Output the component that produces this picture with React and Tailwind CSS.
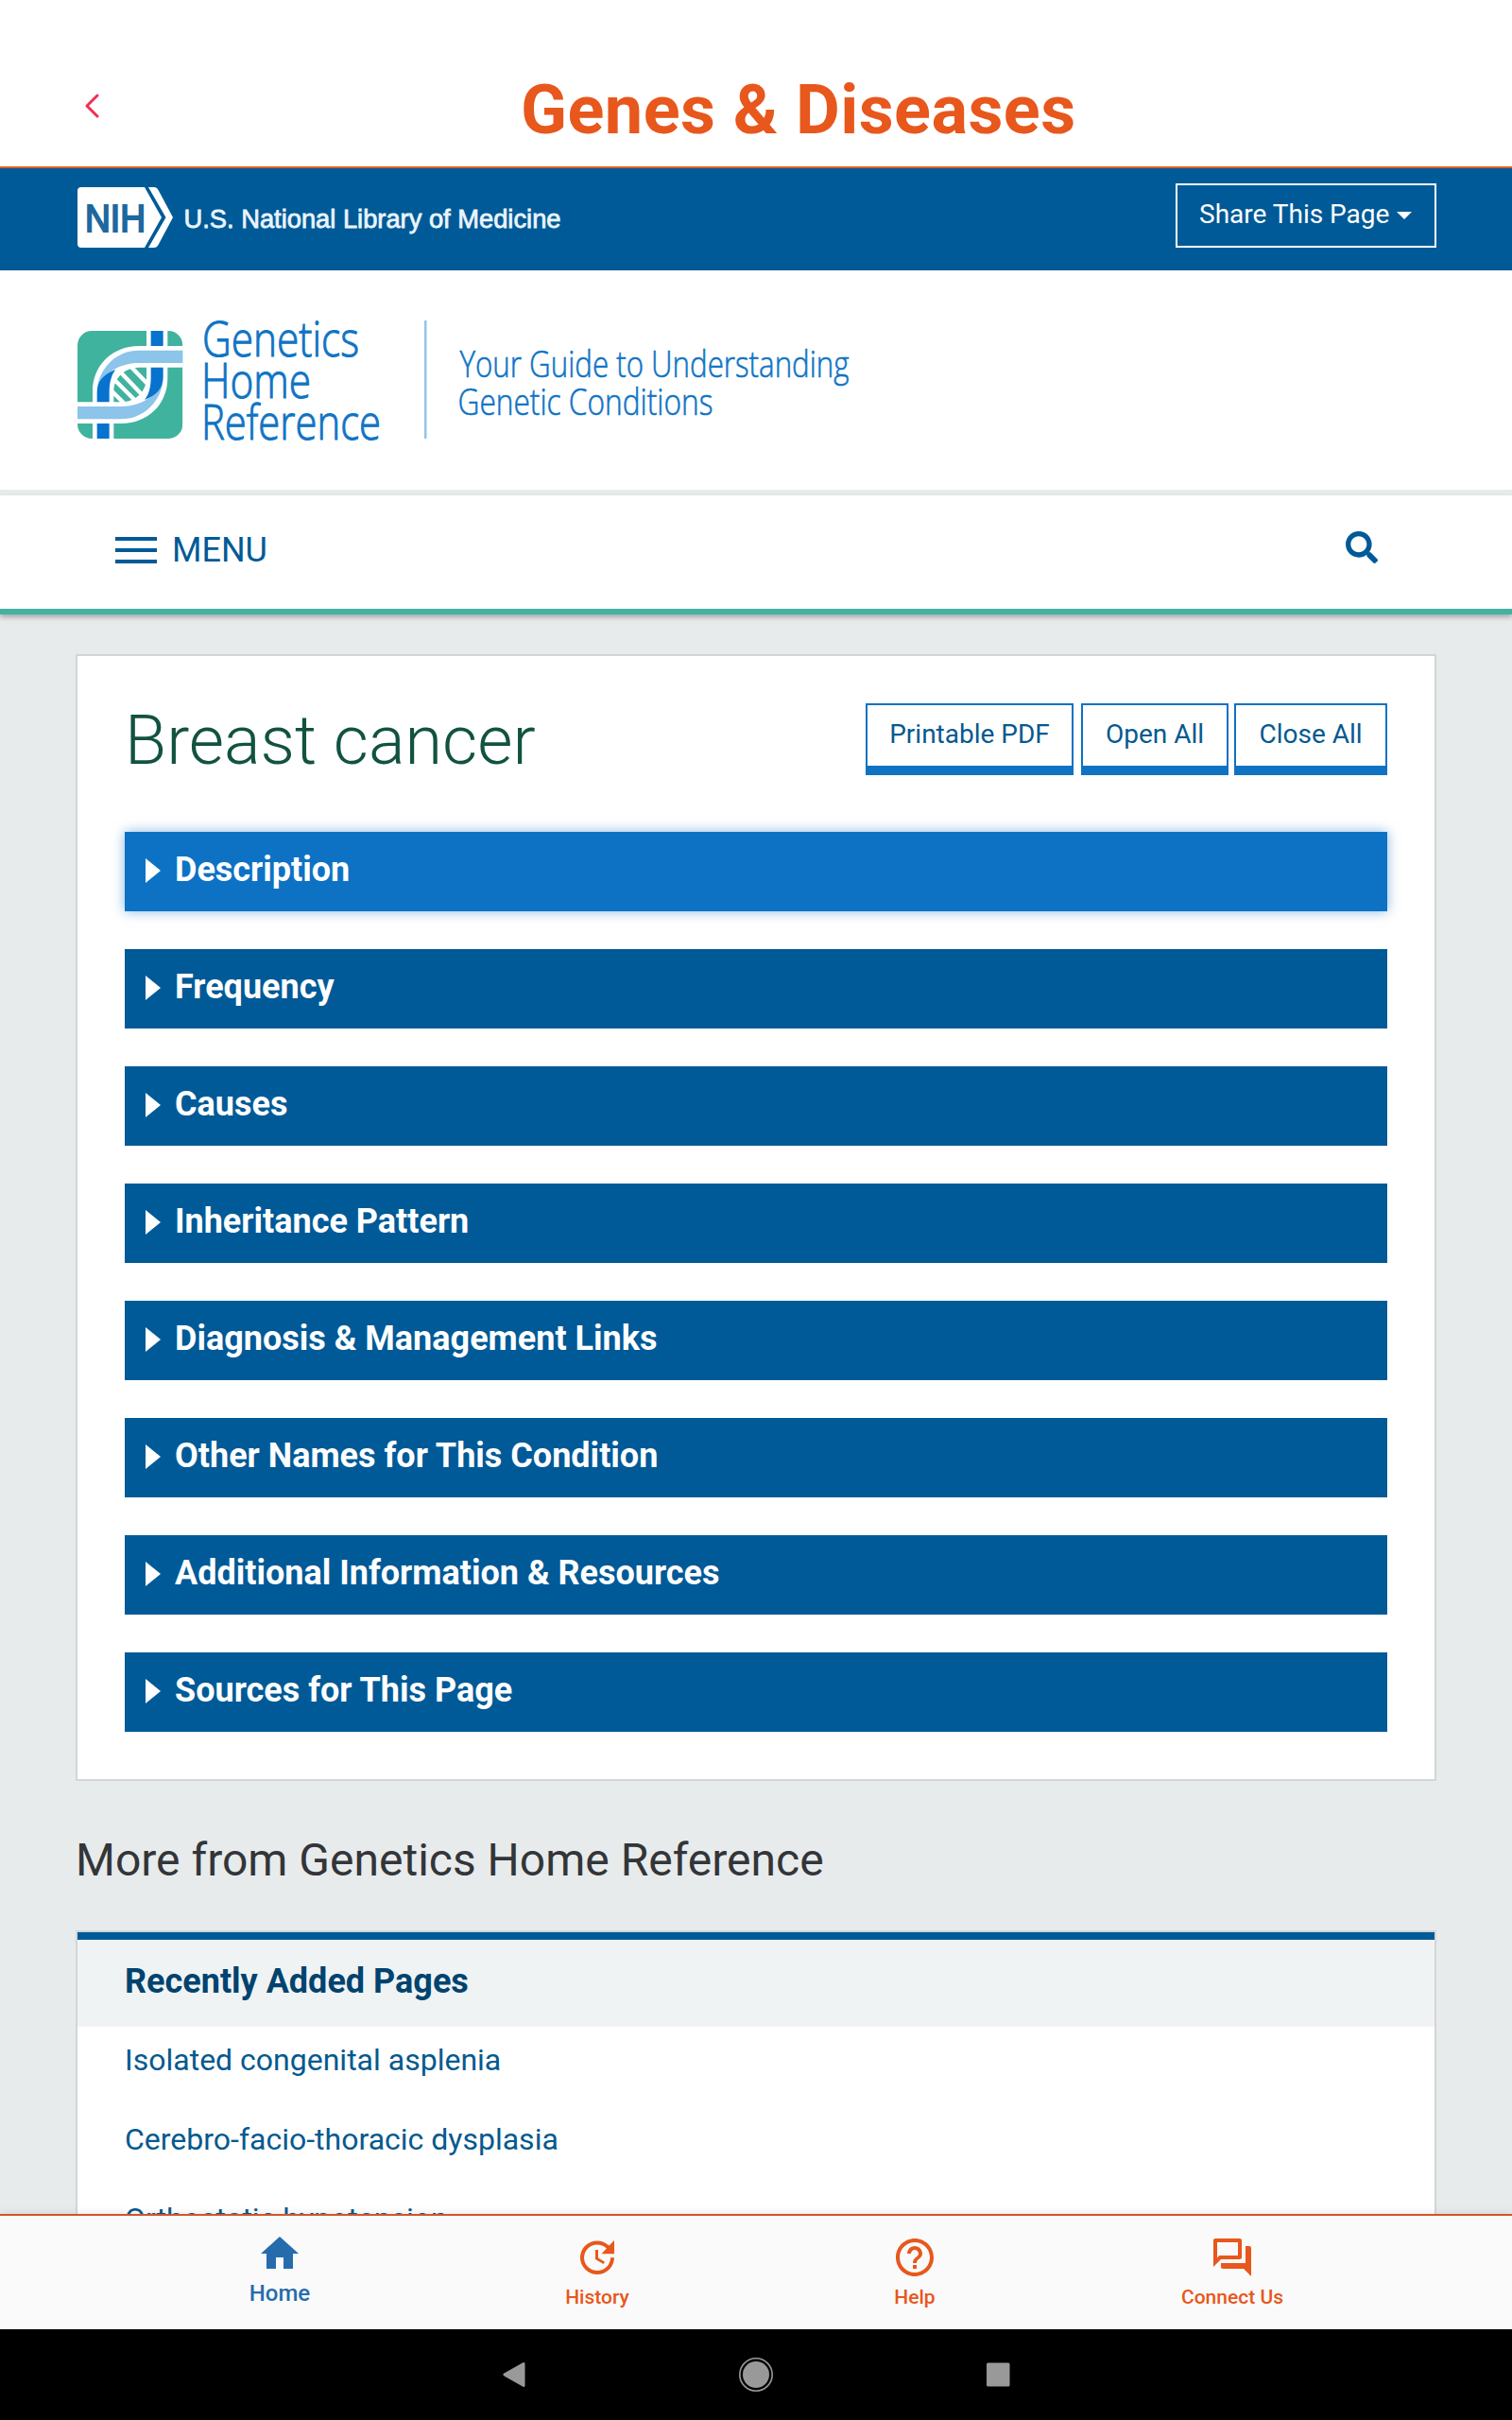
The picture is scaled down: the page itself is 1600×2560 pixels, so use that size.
import React from "react"
import clsx from "clsx"
import { MdHome, MdUpdate, MdHelpOutline, MdOutlineForum } from "react-icons/md"
import { FaSearch } from "react-icons/fa"

const sections = [
  "Description",
  "Frequency",
  "Causes",
  "Inheritance Pattern",
  "Diagnosis & Management Links",
  "Other Names for This Condition",
  "Additional Information & Resources",
  "Sources for This Page",
]

const recentPages = [
  "Isolated congenital asplenia",
  "Cerebro-facio-thoracic dysplasia",
  "Orthostatic hypotension",
]

const tabs = [
  { label: "Home", icon: MdHome, active: true },
  { label: "History", icon: MdUpdate },
  { label: "Help", icon: MdHelpOutline },
  { label: "Connect Us", icon: MdOutlineForum },
]

const NihLogo = () => (
  <svg width="520" height="64" viewBox="0 0 520 64" className="block overflow-visible">
    <path d="M4 0H71L89 32L71 64H4Q0 64 0 60V4Q0 0 4 0Z" fill="#fff" />
    <path d="M75 0H81Q84 0 85.500 3L101 32L85.500 61Q84 64 81 64H75L93.500 32Z" fill="#fff" />
    <text x="8" y="46.500" textLength="64" lengthAdjust="spacingAndGlyphs" fontFamily="Liberation Sans" fontSize="40" fill="#1d689f" stroke="#1d689f" strokeWidth="2">NIH</text>
    <text x="112.500" y="42.500" textLength="399" lengthAdjust="spacingAndGlyphs" fontFamily="Liberation Sans" fontSize="28.500" fill="#eaf5fd" stroke="#eaf5fd" strokeWidth="0.800">U.S. National Library of Medicine</text>
  </svg>
)

// one half of the helix, the other half is the same thing turned around the centre
const StrandGap = () => (
  <path d="M285 88H352V240C352 322 290 384 205 384H64V316H205C250 316 285 282 285 240Z" fill="#fff" />
)

const Strand = () => (
  <g>
    <path d="M64 330H205C268 330 312 298 337 256C324 322 272 370 205 370H64Z" fill="#8cc4ea" />
    <path d="M299 206H338V238C338 272 316 296 279 309C294 290 299 265 299 236Z" fill="#0873ce" />
    <path d="M299 88H338V138H299Z" fill="#0873ce" />
  </g>
)

const GhrLogo = () => (
  <svg width="840" height="170" viewBox="0 0 840 170" className="block overflow-visible">
    <defs>
      <clipPath id="tile">
        <rect x="66" y="90" width="334" height="342" rx="46" />
      </clipPath>
    </defs>
    <g transform="translate(-22 0) scale(0.33333)">
      <g clipPath="url(#tile)">
        <rect x="66" y="90" width="334" height="342" fill="#40b39f" />
        <path d="M172 278L222 328M176 238L262 324M190 208L278 300M228 196L296 266" stroke="#fff" strokeWidth="13" />
        <StrandGap />
        <g transform="rotate(180 233 261)"><StrandGap /></g>
        <Strand />
        <g transform="rotate(180 233 261)"><Strand /></g>
      </g>
    </g>
    <g fontFamily="Open Sans" fontWeight="300" fill="#0f74c4" stroke="#0f74c4" strokeWidth="1">
      <text x="132" y="56.500" fontSize="51" textLength="166" lengthAdjust="spacingAndGlyphs">Genetics</text>
      <text x="131" y="100.500" fontSize="51" textLength="116" lengthAdjust="spacingAndGlyphs">Home</text>
      <text x="131" y="144.500" fontSize="51" textLength="190" lengthAdjust="spacingAndGlyphs">Reference</text>
      <g strokeWidth="0.600">
        <text x="404.500" y="78.500" fontSize="39" textLength="412" lengthAdjust="spacingAndGlyphs">Your Guide to Understanding</text>
        <text x="402.500" y="119" fontSize="39" textLength="270" lengthAdjust="spacingAndGlyphs">Genetic Conditions</text>
      </g>
    </g>
    <rect x="367" y="19" width="2.500" height="125" fill="#93c6e5" />
  </svg>
)

const OutlineButton = ({ className, children }) => (
  <button
    className={clsx(
      "flex h-[76px] items-center justify-center border-2 border-b-[10px] border-[#0f72c3] pb-[3px] text-[28px] leading-none text-[#05598f]",
      className
    )}
  >
    {children}
  </button>
)

const SectionBar = ({ title, active }) => (
  <div
    className={clsx(
      "flex h-[84px] items-center pb-1 pl-[22px]",
      active ? "bg-[#0e72c4] shadow-[0_0_12px_rgba(14,114,196,0.5)]" : "bg-[#005a97]"
    )}
  >
    <svg width="16" height="26" viewBox="0 0 16 26" className="mt-[2px]">
      <path d="M0 0L16 13L0 26Z" fill="#fff" />
    </svg>
    <h2 className="ml-[15px] text-[36px] leading-none font-bold text-white">{title}</h2>
  </div>
)

const Tab = ({ label, icon: Icon, active }) => (
  <div
    className={clsx(
      "flex w-[336px] flex-col items-center font-medium",
      active ? "pt-4 text-[#266cad]" : "pt-5 text-[#e8571c]"
    )}
  >
    <Icon size={48} />
    <span className={active ? "mt-[6px] text-[24px] leading-[24px]" : "mt-2 text-[21px] leading-[21px]"}>
      {label}
    </span>
  </div>
)

const App = () => {
  return (
    <div className="flex h-[2560px] w-[1600px] flex-col overflow-hidden bg-white font-['Roboto',sans-serif]">
      {/* App title bar */}
      <header className="flex h-[178px] shrink-0 items-start border-b-2 border-[#dd5c2b]">
        <svg width="16" height="26" viewBox="0 0 16 26" className="mt-[99px] ml-[89px]" fill="none">
          <path d="M14 2L3 13L14 24" stroke="#ee2f55" strokeWidth="3" strokeLinecap="round" strokeLinejoin="round" />
        </svg>
        <h1 className="mt-[81px] ml-[446px] text-[72px] leading-none font-bold tracking-[0.45px] text-[#e8571c]">
          Genes &amp; Diseases
        </h1>
      </header>

      {/* Web page */}
      <main className="flex min-h-0 flex-1 flex-col overflow-hidden bg-[#e7ebec]">
        <div className="flex h-[108px] shrink-0 items-start justify-between bg-[#005a97] pr-20 pl-[82px]">
          <div className="mt-5">
            <NihLogo />
          </div>
          <button className="mt-4 flex h-[68px] w-[276px] items-start border-2 border-white pt-[17px] pl-[23px] text-[28px] leading-none whitespace-nowrap text-white">
            Share This Page
            <svg width="16" height="8" viewBox="0 0 16 8" className="mt-[11px] ml-2">
              <path d="M0 0H16L8 8Z" fill="#fff" />
            </svg>
          </button>
        </div>

        <div className="h-[238px] shrink-0 border-b-[6px] border-[#e7ebec] bg-white pt-[34px] pl-[82px]">
          <GhrLogo />
        </div>

        <nav className="flex h-[126px] shrink-0 items-center justify-between border-b-[6px] border-[#43b3a0] bg-white pr-[142px] pb-1 pl-[122px] text-[#005a97] shadow-[0_3px_5px_rgba(0,0,0,0.28)]">
          <div className="flex items-center gap-4">
            <div className="flex flex-col gap-2">
              <span className="h-1 w-11 bg-[#005a97]" />
              <span className="h-1 w-11 bg-[#005a97]" />
              <span className="h-1 w-11 bg-[#005a97]" />
            </div>
            <span className="text-[36px] leading-none">MENU</span>
          </div>
          <FaSearch size={34} className="mb-[6px]" />
        </nav>

        <div className="px-20">
          <article className="mt-[42px] h-[1192px] border-2 border-[#d3d5d6] bg-white px-[50px] pt-[50px]">
            <div className="flex h-[136px] items-start justify-between">
              <h1 className="mt-1 text-[72px] leading-none font-light text-[#125241]">Breast cancer</h1>
              <div className="flex">
                <OutlineButton className="w-[220px]">Printable PDF</OutlineButton>
                <OutlineButton className="ml-2 w-[156px]">Open All</OutlineButton>
                <OutlineButton className="ml-[6px] w-[162px]">Close All</OutlineButton>
              </div>
            </div>
            <div className="flex flex-col gap-10">
              {sections.map((title, i) => (
                <SectionBar key={title} title={title} active={i === 0} />
              ))}
            </div>
          </article>

          <h2 className="mt-[60px] mb-[50px] text-[48px] leading-none text-[#333538]">
            More from Genetics Home Reference
          </h2>

          <aside className="border-2 border-[#d3d5d6] bg-white">
            <h3 className="flex h-[100px] items-center border-t-8 border-[#005a97] bg-[#eff3f4] pb-1 pl-[50px] text-[36px] leading-none font-bold text-[#00436f]">
              Recently Added Pages
            </h3>
            <ul className="pl-[50px]">
              {recentPages.map((page) => (
                <li key={page} className="flex h-[84px] items-center pb-[14px] text-[32px] leading-none text-[#05598f]">
                  {page}
                </li>
              ))}
            </ul>
          </aside>
        </div>
      </main>

      {/* Bottom tabs */}
      <div className="relative flex h-[122px] shrink-0 justify-center border-t-2 border-[#d2562a] bg-[#fafafa] shadow-[0_0_10px_rgba(0,0,0,0.1)]">
        {tabs.map((tab) => (
          <Tab key={tab.label} {...tab} />
        ))}
      </div>

      {/* Android navigation */}
      <div className="relative flex h-24 shrink-0 items-center justify-center bg-black">
        <svg width="540" height="40" viewBox="0 0 540 40" fill="#999">
          <path d="M25.500 8.500V31.500Q25.500 34 23 32.600L3.500 21.400Q1 20 3.500 18.600L23 7.400Q25.500 6 25.500 8.500Z" />
          <circle cx="270" cy="20" r="17.200" fill="none" stroke="#999" strokeWidth="1.600" />
          <circle cx="270" cy="20" r="14" />
          <rect x="514" y="7.500" width="24.500" height="25" rx="1.500" />
        </svg>
      </div>
    </div>
  )
}

export default App
